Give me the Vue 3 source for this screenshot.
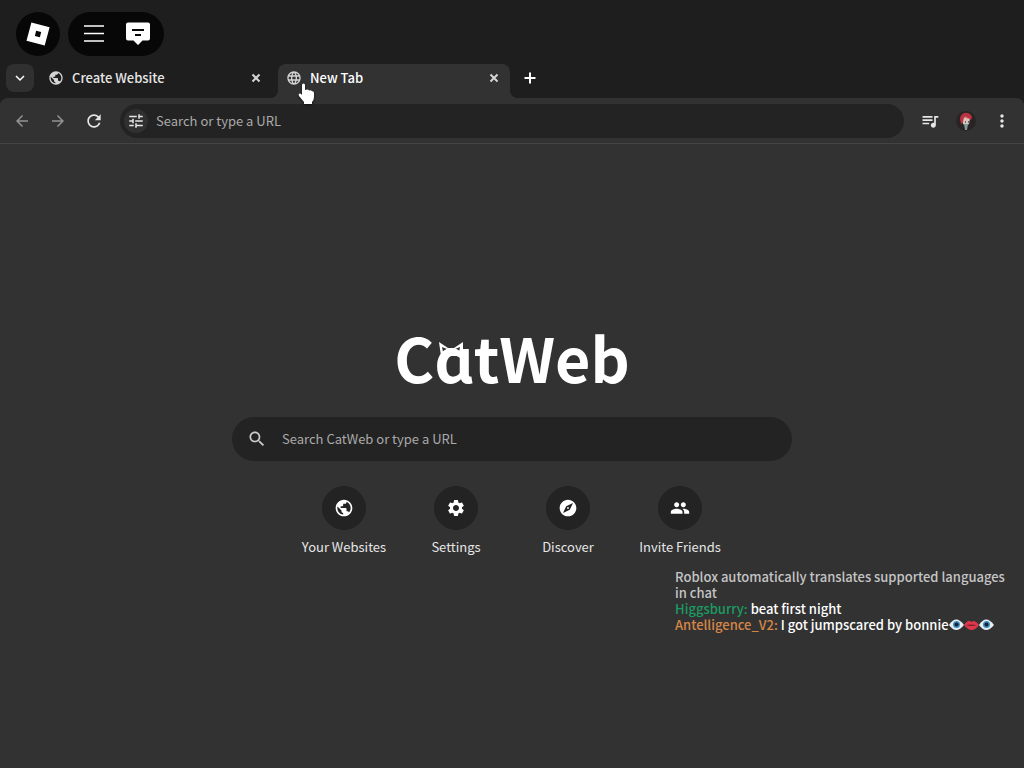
<template>
  <div class="browser">
    <header class="browserTop">
      <nav class="robloxBar">
        <button class="robloxButton" aria-label="Roblox menu">
          <svg viewBox="0 0 24 24" width="24" height="24"><path fill-rule="evenodd" d="M5.4 0.4 23.6 5.3 18.7 23.6 0.5 18.7ZM10.1 8.8 8.9 13.9 13.9 15.2 15.2 10.1Z" /></svg>
        </button>
        <div class="robloxPill">
          <button aria-label="Menu">
            <svg class="stroked thin" viewBox="0 0 24 24" width="24" height="24"><path d="M2 4h20M2 11.500h20M2 19h20" /></svg>
          </button>
          <button aria-label="Chat">
            <svg viewBox="0 0 24 24" width="24" height="24"><path fill-rule="evenodd" d="M2 .5h20q2 0 2 2v14q0 2-2 2h-5.500L12 23 7.500 18.500H2q-2 0-2-2v-14Q0 .5 2 .5ZM6 7v2h12V7ZM9 12v2h6v-2Z" /></svg>
          </button>
        </div>
      </nav>
      <div class="tabRow">
        <button class="tabSearch" aria-label="Search tabs">
          <svg class="stroked thin" viewBox="0 0 12 12" width="12" height="12"><path d="m2 4 4 4 4-4" /></svg>
        </button>
        <div v-for="tab in tabs" :key="tab.title" class="tab" :class="{ active: tab.active }">
          <svg class="tabIcon" viewBox="0 0 24 24" width="16" height="16"><path :d="icons[tab.icon]" /></svg>
          <span class="tabTitle">{{ tab.title }}</span>
          <button class="tabClose" aria-label="Close tab">
            <svg class="stroked" viewBox="0 0 12 12" width="12" height="12"><path d="m2.500 2.500 7 7M9.500 2.500l-7 7" /></svg>
          </button>
        </div>
        <button class="newTab" aria-label="New tab">
          <svg class="stroked" viewBox="0 0 12 12" width="12" height="12"><path d="M6 0.500v11M0.500 6h11" /></svg>
        </button>
      </div>

      <div class="toolbar">
        <div class="toolbarNav">
          <button class="dim" aria-label="Back">
            <svg viewBox="0 0 24 24" width="18" height="18"><path :d="icons.back" /></svg>
          </button>
          <button class="dim" aria-label="Forward">
            <svg viewBox="0 0 24 24" width="18" height="18"><path :d="icons.forward" /></svg>
          </button>
          <button aria-label="Reload">
            <svg viewBox="0 0 24 24" width="20" height="20"><path :d="icons.refresh" /></svg>
          </button>
        </div>
        <div class="addressBar">
          <button class="siteSettings" aria-label="Site settings">
            <svg viewBox="0 0 24 24" width="18" height="18"><path :d="icons.tune" /></svg>
          </button>
          <input v-model="url" type="text" aria-label="Address" placeholder="Search or type a URL">
        </div>
        <div class="toolbarActions">
          <button aria-label="Music queue">
            <svg viewBox="0 0 24 24" width="20" height="20"><path :d="icons.music" /></svg>
          </button>
          <button aria-label="Profile">
            <svg viewBox="0 0 20 20" width="20" height="20">
              <circle cx="10" cy="10" r="10" fill="#292423" />
              <path d="M6 8q4-4 8-1l-1 6-3 2-3-2z" fill="#dcc4ba" />
              <path d="M4 8q0-4 4-6 6-1 8 4l-1 3-3-2-4-1-1 5-2 2z" fill="#b83443" />
              <path d="m9 5 4 3-4-1z" fill="#e77078" />
              <path d="M8 13h4l-1 6H9z" fill="#779b9e" />
              <path d="M9 10h1v2H9zM12 10h1v2h-1z" fill="#576e77" />
            </svg>
          </button>
          <button aria-label="More">
            <svg viewBox="0 0 24 24" width="20" height="20"><path :d="icons.more" /></svg>
          </button>
        </div>
      </div>
    </header>

    <main class="newTabPage">
      <h1 class="logo" aria-label="CatWeb">C<span class="logoCat">ɑ<svg viewBox="0 0 24 14" width="24" height="14"><path fill-rule="evenodd" d="M0 0 9 6h6L24 0v14H2ZM3 5l1 5 4-3ZM21 5l-1 5-4-3Z" /></svg></span>tWeb</h1>
      <div class="searchBox">
        <svg viewBox="0 0 24 24" width="20" height="20"><path :d="icons.search" /></svg>
        <input v-model="search" type="text" aria-label="Search CatWeb" placeholder="Search CatWeb or type a URL">
      </div>
      <div class="shortcuts">
        <button v-for="item in shortcuts" :key="item.label" class="shortcut">
          <span class="shortcutIcon">
            <svg viewBox="0 0 24 24" width="20" height="20"><path :d="icons[item.icon]" /></svg>
          </span>
          <span>{{ item.label }}</span>
        </button>
      </div>
    </main>

    <div class="chat">
      <div class="chatSystem">Roblox automatically translates supported languages in chat</div>
      <div><span class="green">Higgsburry:</span> beat first night</div>
      <div>
        <span class="orange">Antelligence_V2:</span> I got jumpscared by bonnie<svg v-for="(face, i) in ['eye', 'mouth', 'eye']" :key="i" class="emoji" viewBox="0 0 15 12" width="15" height="12">
          <template v-if="face === 'eye'">
            <path d="M0 6q7-11 15 0-8 10-15 0Z" fill="#e3edf2" />
            <circle cx="7.500" cy="5.500" r="3.500" fill="#3f8dc2" />
            <circle cx="7.500" cy="5.500" r="2" fill="#17242c" />
          </template>
          <template v-else>
            <path d="M0 6q4-5 6-4l1.500 1L9 2q3 0 6 4-7 10-15 0Z" fill="#dd3849" />
            <path d="M2 6q5-1 11 0-6 2-11 0Z" fill="#761b2b" />
          </template>
        </svg>
      </div>
    </div>

    <svg class="pointer" viewBox="0 0 16 21" width="16" height="21"><path d="M4 2q0-1.500 1.500-1.500T7 2V7l2-.5q1.500 0 2 1l1-.2q1.500 0 2 1l.5-.1Q16 8.500 16 10v4q0 3-2 5v2H6v-2L1 13q-1-2 .5-2.500T4 12Z" /></svg>
  </div>
</template>

<script setup>
import { ref } from 'vue';

const url = ref('');
const search = ref('');

const tabs = [
  { title: 'Create Website', icon: 'globe', active: false },
  { title: 'New Tab', icon: 'language', active: true }
];

const shortcuts = [
  { label: 'Your Websites', icon: 'globe' },
  { label: 'Settings', icon: 'settings' },
  { label: 'Discover', icon: 'explore' },
  { label: 'Invite Friends', icon: 'group' }
];

// 24x24 icon paths
const icons = {
  globe: 'M12 2C6.48 2 2 6.48 2 12s4.48 10 10 10 10-4.48 10-10S17.52 2 12 2zm-1 17.93c-3.95-.49-7-3.85-7-7.93 0-.62.08-1.21.21-1.79L9 15v1c0 1.1.9 2 2 2v1.930zm6.9-2.54c-.26-.81-1-1.39-1.9-1.39h-1v-3c0-.55-.45-1-1-1H8v-2h2c.55 0 1-.45 1-1V7h2c1.1 0 2-.9 2-2v-.41c2.93 1.19 5 4.06 5 7.41 0 2.08-.8 3.97-2.1 5.390z',
  language: 'M11.99 2C6.47 2 2 6.48 2 12s4.47 10 9.99 10C17.52 22 22 17.52 22 12S17.52 2 11.99 2zm6.93 6h-2.95c-.32-1.25-.78-2.45-1.38-3.56 1.84.63 3.37 1.91 4.33 3.560zM12 4.04c.83 1.2 1.48 2.53 1.91 3.96h-3.82c.43-1.43 1.08-2.76 1.91-3.960zM4.26 14C4.1 13.36 4 12.69 4 12s.1-1.36.26-2h3.38c-.08.66-.14 1.32-.14 2s.06 1.34.14 2H4.260zm.82 2h2.95c.32 1.25.78 2.45 1.38 3.56-1.84-.63-3.37-1.9-4.33-3.560zm2.95-8H5.08c.96-1.66 2.49-2.93 4.33-3.56C8.81 5.55 8.35 6.75 8.03 8zM12 19.96c-.83-1.2-1.48-2.53-1.91-3.96h3.82c-.43 1.43-1.08 2.76-1.91 3.960zM14.34 14H9.66c-.09-.66-.16-1.32-.16-2s.07-1.35.16-2h4.68c.09.65.16 1.32.16 2s-.07 1.34-.16 2zm.25 5.56c.6-1.11 1.06-2.31 1.38-3.56h2.95c-.96 1.65-2.49 2.93-4.33 3.560zM16.36 14c.08-.66.14-1.32.14-2s-.06-1.34-.14-2h3.38c.16.64.26 1.31.26 2s-.1 1.36-.26 2h-3.380z',
  back: 'M20 11H7.83l5.59-5.59L12 4l-8 8 8 8 1.41-1.41L7.83 13H20v-2z',
  forward: 'M12 4l-1.41 1.41L16.17 11H4v2h12.17l-5.58 5.59L12 20l8-8z',
  refresh: 'M17.65 6.35C16.2 4.9 14.21 4 12 4c-4.42 0-7.99 3.58-7.99 8s3.57 8 7.99 8c3.73 0 6.84-2.55 7.73-6h-2.08c-.82 2.33-3.04 4-5.65 4-3.31 0-6-2.69-6-6s2.69-6 6-6c1.66 0 3.14.69 4.22 1.78L13 11h7V4l-2.35 2.350z',
  tune: 'M3 17v2h6v-2H3zM3 5v2h10V5H3zm10 16v-2h8v-2h-8v-2h-2v6h2zM7 9v2H3v2h4v2h2V9H7zm14 4v-2H11v2h10zm-6-4h2V7h4V5h-4V3h-2v6z',
  music: 'M15 6H3v2h12V6zm0 4H3v2h12v-2zM3 16h8v-2H3v2zM17 6v8.18c-.31-.11-.65-.18-1-.18-1.66 0-3 1.34-3 3s1.34 3 3 3 3-1.34 3-3V8h3V6h-5z',
  more: 'M12 8c1.1 0 2-.9 2-2s-.9-2-2-2-2 .9-2 2 .9 2 2 2zm0 2c-1.1 0-2 .9-2 2s.9 2 2 2 2-.9 2-2-.9-2-2-2zm0 6c-1.1 0-2 .9-2 2s.9 2 2 2 2-.9 2-2-.9-2-2-2z',
  search: 'M15.5 14h-.79l-.28-.27C15.41 12.59 16 11.11 16 9.500 16 5.910 13.090 3 9.500 3S3 5.910 3 9.500 5.910 16 9.500 16c1.610 0 3.090-.59 4.230-1.570l.27.28v.79l5 4.990L20.490 19l-4.990-5zm-6 0C7.010 14 5 11.990 5 9.500S7.010 5 9.500 5 14 7.010 14 9.500 11.990 14 9.500 14z',
  settings: 'M19.14 12.94c.04-.3.06-.61.06-.94 0-.32-.02-.64-.07-.94l2.03-1.58c.18-.14.23-.41.12-.61l-1.92-3.32c-.12-.22-.37-.29-.59-.22l-2.39.96c-.5-.38-1.03-.7-1.62-.94l-.36-2.54c-.04-.24-.24-.41-.48-.41h-3.84c-.24 0-.43.17-.47.41l-.36 2.54c-.59.24-1.13.57-1.62.94l-2.39-.96c-.22-.08-.47 0-.59.22L2.74 8.87c-.12.21-.08.47.12.61l2.03 1.58c-.05.3-.09.63-.09.94s.02.64.07.94l-2.03 1.58c-.18.14-.23.41-.12.61l1.92 3.32c.12.22.37.29.59.22l2.39-.96c.5.38 1.03.7 1.62.94l.36 2.54c.05.24.24.41.48.41h3.84c.24 0 .44-.17.47-.41l.36-2.54c.59-.24 1.13-.56 1.62-.94l2.39.96c.22.08.47 0 .59-.22l1.92-3.32c.12-.22.07-.47-.12-.61l-2.01-1.580zM12 15.6c-1.98 0-3.6-1.62-3.6-3.6s1.62-3.6 3.6-3.6 3.6 1.62 3.6 3.6-1.62 3.6-3.6 3.600z',
  explore: 'M12 10.9c-.61 0-1.1.49-1.1 1.1s.49 1.1 1.1 1.1c.61 0 1.1-.49 1.1-1.1s-.49-1.1-1.1-1.100zM12 2C6.48 2 2 6.48 2 12s4.48 10 10 10 10-4.48 10-10S17.52 2 12 2zm2.19 12.19L6 18l3.81-8.19L18 6l-3.81 8.190z',
  group: 'M16 11c1.66 0 2.99-1.34 2.99-3S17.66 5 16 5s-3 1.34-3 3 1.34 3 3 3zm-8 0c1.66 0 2.99-1.34 2.99-3S9.66 5 8 5 5 6.34 5 8s1.34 3 3 3zm0 2c-2.33 0-7 1.17-7 3.500V19h14v-2.500c0-2.33-4.67-3.500-7-3.500zm8 0c-.29 0-.62.02-.97.05 1.16.84 1.97 1.97 1.97 3.450V19h6v-2.500c0-2.33-4.67-3.500-7-3.500z'
};
</script>

<style>
body {
  background-color: #323232;
}
</style>

<style scoped>
.browser {
  position: relative;
  min-height: 100vh;
  background-color: #323232;
  color: #e6e6e6;
  font-family: "Noto Sans CJK SC", "Noto Sans", sans-serif;
  font-size: 13px;
  line-height: 16px;
}
.browser * {
  box-sizing: border-box;
}
button {
  display: flex;
  align-items: center;
  justify-content: center;
  padding: 0;
  border: 0;
  background: none;
  color: inherit;
  font: inherit;
}
input {
  flex: 1;
  min-width: 0;
  padding: 0;
  border: 0;
  outline: 0;
  background: none;
  color: #e6e6e6;
  font: inherit;
}
input::placeholder {
  color: #aaaaaa;
  opacity: 1;
}
svg {
  flex: none;
  fill: currentColor;
}
.stroked {
  fill: none;
  stroke: currentColor;
  stroke-width: 2;
}
.stroked.thin {
  stroke-width: 1.5;
}
.browserTop {
  background-color: #1e1e1e;
}
.robloxBar {
  display: flex;
  gap: 8px;
  padding: 12px 16px 8px;
  color: white;
}
.robloxButton {
  width: 44px;
  height: 44px;
  border-radius: 50%;
  background-color: #070707;
}
.robloxPill {
  display: flex;
  padding: 0 4px;
  border-radius: 22px;
  background-color: #070707;
}
.robloxPill button {
  width: 44px;
  height: 44px;
}
.tabRow {
  display: flex;
  gap: 6px;
  height: 34px;
  padding-left: 6px;
}
.tabSearch {
  width: 28px;
  height: 28px;
  border-radius: 8px;
  background-color: #303030;
  color: white;
}
.tab {
  position: relative;
  display: flex;
  align-items: center;
  width: 232px;
  height: 34px;
  padding: 0 8px 6px;
}
.tab.active {
  border-radius: 8px 8px 0 0;
  background-color: #323232;
  color: white;
}
.tab.active::before,
.tab.active::after {
  content: "";
  position: absolute;
  bottom: 0;
  width: 8px;
  height: 8px;
}
.tab.active::before {
  right: 100%;
  background: radial-gradient(circle at 0 0, transparent 8px, #323232 8px);
}
.tab.active::after {
  left: 100%;
  background: radial-gradient(circle at 100% 0, transparent 8px, #323232 8px);
}
.tabIcon {
  color: #d5d5d5;
}
.tabTitle {
  flex: 1;
  margin-left: 8px;
  font-weight: 500;
}
.tabClose {
  width: 16px;
  height: 16px;
  color: #d5d5d5;
}
.newTab {
  width: 28px;
  height: 28px;
  color: white;
}
.toolbar {
  display: flex;
  align-items: center;
  gap: 16px;
  height: 46px;
  padding: 0 12px;
  border-radius: 8px 8px 0 0;
  background-color: #323232;
  box-shadow: inset 0 -1px #444444;
}
.toolbarNav,
.toolbarActions {
  display: flex;
  gap: 16px;
}
.toolbarNav button,
.toolbarActions button {
  width: 20px;
  height: 20px;
}
.toolbarNav .dim {
  color: #929292;
}
.addressBar {
  display: flex;
  align-items: center;
  flex: 1;
  gap: 8px;
  height: 34px;
  padding: 0 4px;
  border-radius: 17px;
  background-color: #232323;
}
.siteSettings {
  width: 24px;
  height: 24px;
  border-radius: 50%;
  background-color: #303030;
}
.newTabPage {
  display: flex;
  flex-direction: column;
  align-items: center;
  padding: 181px 16px 24px;
}
.logo {
  margin: 0 0 28px;
  color: white;
  font-size: 61px;
  line-height: 64px;
  font-weight: 700;
}
.logoCat {
  position: relative;
}
.logoCat svg {
  position: absolute;
  left: 5px;
  top: 30px;
}
.searchBox {
  display: flex;
  align-items: center;
  gap: 15px;
  width: 100%;
  max-width: 560px;
  height: 44px;
  padding: 0 15px;
  border-radius: 22px;
  background-color: #232323;
  color: #cccccc;
}
.shortcuts {
  display: flex;
  margin-top: 25px;
}
.shortcut {
  flex-direction: column;
  gap: 9px;
  width: 112px;
}
.shortcutIcon {
  display: flex;
  align-items: center;
  justify-content: center;
  width: 44px;
  height: 44px;
  border-radius: 50%;
  background-color: #232323;
  color: white;
}
.chat {
  position: absolute;
  top: 569px;
  right: 16px;
  width: 333px;
  color: white;
  font-weight: 500;
}
.chatSystem {
  color: #c5c5c5;
}
.green {
  color: #1b9b62;
}
.orange {
  color: #d58747;
}
.emoji {
  vertical-align: -1px;
}
.pointer {
  position: absolute;
  left: 298px;
  top: 83px;
  color: white;
  filter: drop-shadow(0 1px 1px #111111);
  pointer-events: none;
}
</style>
